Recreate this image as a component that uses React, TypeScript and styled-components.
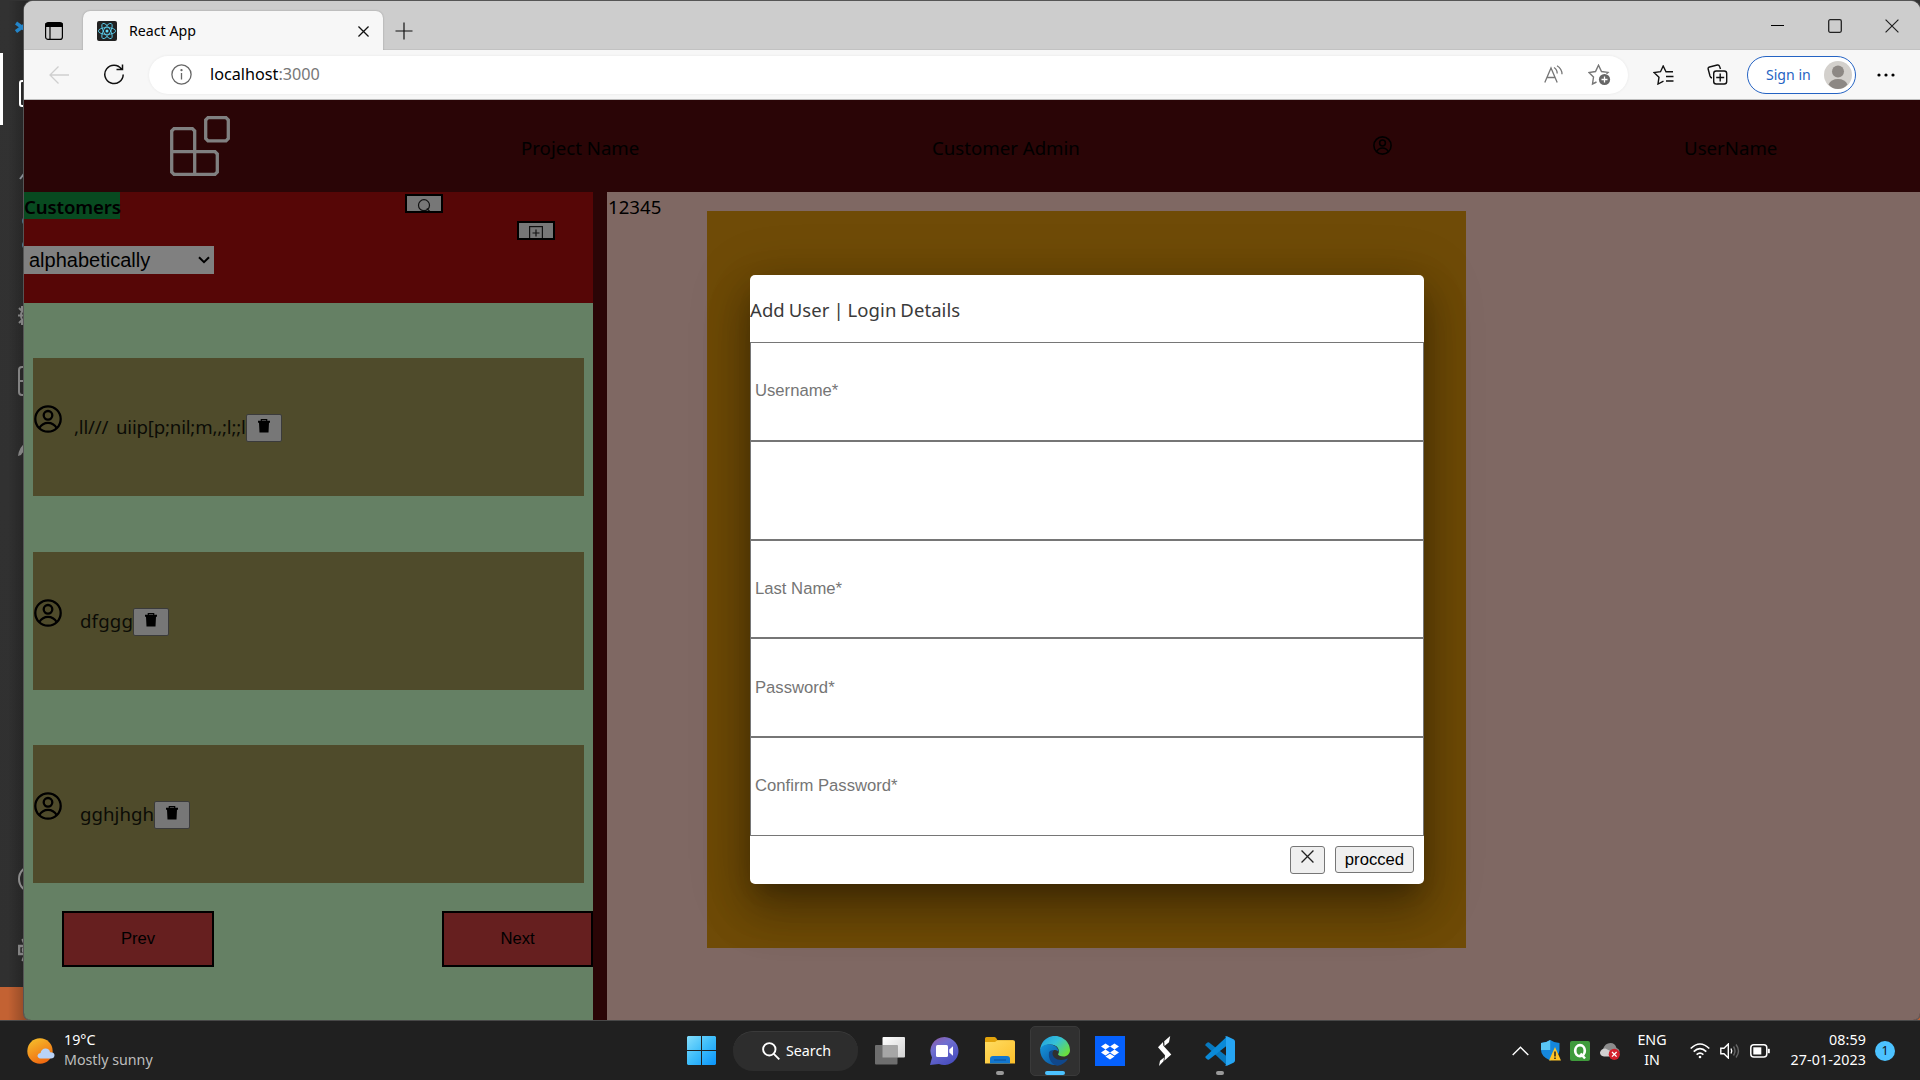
import React from "react";
import styled, { createGlobalStyle } from "styled-components";

const ui = `"Noto Sans", "Open Sans", sans-serif`;
const arial = `"Liberation Sans", Arial, sans-serif`;

const GlobalStyle = createGlobalStyle`
  * { box-sizing: border-box; }
  html, body { margin: 0; padding: 0; overflow: hidden; }
  body { font-family: ${ui}; color: #000; }
  svg { display: block; flex: none; }
`;

const Screen = styled.div`
  width: 1920px;
  height: 1080px;
  display: grid;
  grid-template-rows: 1020px 60px;
  overflow: hidden;
`;

const Desktop = styled.div`
  display: flex;
  padding-top: 1px;
  background: linear-gradient(#323232 0, #303030 987px, #c36233 987px);
  overflow: hidden;
`;

/* Editor strip that peeks out behind the browser */
const EditorStrip = styled.div`
  width: 36px;
  flex: none;
  height: 1019px;
  overflow: hidden;
  display: flex;
  flex-direction: column;
  background: linear-gradient(90deg, rgba(0, 0, 0, 0) 8px, rgba(0, 0, 0, 0.22) 24px);
`;

const StripItem = styled.div<{ $gap: number; $left?: number }>`
  margin-top: ${(p) => p.$gap}px;
  padding-left: ${(p) => p.$left ?? 18}px;
  flex: none;
`;

const ActiveMark = styled.div`
  margin-top: 19px;
  height: 72px;
  border-left: 3px solid #fff;
  padding: 27px 0 0 16px;
  flex: none;
`;

/* Browser window */
const Window = styled.div`
  width: 1896px;
  margin-left: -12px;
  height: 1019px;
  flex: none;
  border-radius: 9px 9px 7px 7px;
  overflow: hidden;
  box-shadow: 0 0 0 1px #555;
  background: #cdcdcd;
  display: grid;
  grid-template-rows: 49px 50px 920px;
`;

const TabBar = styled.div`
  display: flex;
  align-items: flex-end;
  background: #cdcdcd;
  border-bottom: 1px solid #c2c2c2;
`;

const TabActions = styled.div`
  padding: 0 0 9px 21px;
  width: 59px;
`;

const Tab = styled.div`
  width: 300px;
  height: 39px;
  margin-bottom: -1px;
  background: #f7f7f7;
  border-radius: 7px 7px 0 0;
  box-shadow: 0 0 2px rgba(0, 0, 0, 0.28);
  clip-path: inset(-3px -3px 0 -3px);
  display: flex;
  align-items: center;
  padding: 0 14px;
`;

const Favicon = styled.div`
  width: 20px;
  height: 20px;
  border-radius: 2px;
  background: #222;
`;

const TabTitle = styled.span`
  font-size: 14.2px;
  margin-left: 12px;
  flex: 1;
`;

const NewTab = styled.div`
  padding: 0 0 9px 12px;
`;

const WindowControls = styled.div`
  margin-left: auto;
  height: 48px;
  display: flex;
  align-items: center;
  gap: 43px;
  padding: 1px 21px 0 0;
`;

const Toolbar = styled.div`
  display: flex;
  align-items: center;
  padding-left: 25px;
  background: #f7f7f7;
  border-bottom: 1px solid #bdbdbd;
`;

const Address = styled.div`
  width: 1479px;
  height: 38px;
  margin-left: 25px;
  border-radius: 19px;
  background: #fff;
  box-shadow: 0 0 3px rgba(0, 0, 0, 0.07);
  display: flex;
  align-items: center;
  padding: 0 17px 0 22px;
`;

const Url = styled.span`
  font-size: 16.2px;
  margin-left: 18px;
  padding-bottom: 1px;
  flex: 1;
  color: #777;
  b { font-weight: 400; color: #000; }
`;

const SignIn = styled.div`
  width: 109px;
  height: 38px;
  margin-left: 19px;
  border: 1.5px solid #2563c3;
  border-radius: 19px;
  background: #fff;
  display: flex;
  align-items: center;
  justify-content: space-between;
  padding: 0 3px 0 18px;
  font-size: 14.1px;
  color: #2563c3;
`;

const Spaced = styled.div<{ $left: number }>`
  margin-left: ${(p) => p.$left}px;
`;

/* Page */
const Page = styled.div`
  position: relative;
  display: grid;
  grid-template-rows: 92px 828px;
  background: #2a0506;
  font-size: 18.65px;
`;

const Header = styled.header`
  display: flex;
  align-items: center;
  padding-left: 146px;
  color: #000;
`;

const HeaderItem = styled.div<{ $width: number; $lift?: number }>`
  width: ${(p) => p.$width}px;
  flex: none;
  padding-bottom: ${(p) => p.$lift ?? 0}px;
  padding-top: 2px;
  white-space: nowrap;
`;

const Body = styled.div`
  display: grid;
  grid-template-columns: 569px 1313px;
  column-gap: 14px;
`;

const Sidebar = styled.aside`
  background: #658064;
  display: flex;
  flex-direction: column;
`;

const Filters = styled.div`
  height: 111px;
  background: #560606;
  display: grid;
  grid-template-columns: 381px 112px 76px;
  grid-template-rows: 27px 27px 28px;
`;

const Title = styled.div`
  width: 96px;
  height: 27px;
  background: #084a20;
  font-size: 18.6px;
  font-weight: 600;
  line-height: 30px;
  letter-spacing: -0.12px;
  white-space: nowrap;
`;

const ToolButton = styled.button`
  width: 38px;
  height: 19px;
  margin: 2px 0 0;
  padding: 3px 0 0;
  border: 2px solid #000;
  background: #777;
  overflow: hidden;
  display: flex;
  justify-content: center;
  align-items: flex-start;
`;

const AddButton = styled(ToolButton)`
  grid-column: 2 / 4;
  grid-row: 2;
  margin-left: 112px;
`;

const Select = styled.div`
  grid-row: 3;
  width: 190px;
  height: 28px;
  background: #808080;
  font-family: ${arial};
  font-size: 20px;
  line-height: 29px;
  display: flex;
  justify-content: space-between;
  align-items: center;
  padding: 0 4px 0 5px;
`;

const CustomerList = styled.div`
  padding: 55px 9px 0;
  display: flex;
  flex-direction: column;
  gap: 55.5px;
`;

const CustomerCard = styled.div`
  height: 138px;
  background: #4f4b2b;
  display: flex;
  align-items: flex-start;
  padding: 47px 0 0 1px;
`;

const CustomerName = styled.div<{ $left: number; $track: number }>`
  margin: 8px 0 0 ${(p) => p.$left}px;
  line-height: 28px;
  letter-spacing: ${(p) => p.$track}px;
  word-spacing: 3px;
  color: #0b0b06;
  white-space: pre;
`;

const DeleteButton = styled.button`
  width: 36px;
  height: 28px;
  margin: 9px 0 0;
  padding: 4px 0 0;
  border: 1px solid #3b3b3b;
  border-radius: 2px;
  background: #777;
  display: flex;
  justify-content: center;
  align-items: flex-start;
`;

const Pager = styled.div`
  display: flex;
  justify-content: space-between;
  padding: 28px 0 0 38px;
`;

const PagerButton = styled.button<{ $w: number }>`
  width: ${(p) => p.$w}px;
  height: 56px;
  border: 2px solid #000;
  background: #661f1f;
  font: 16.67px ${arial};
  padding: 0;
  color: #000;
`;

const Content = styled.main`
  background: #7f6863;
  display: flex;
  align-items: flex-start;
`;

const Counter = styled.div`
  width: 100px;
  padding-left: 1px;
  line-height: 29px;
`;

const Panel = styled.div`
  width: 759px;
  height: 737px;
  margin-top: 19px;
  background: #6f4b07;
`;

const Modal = styled.form`
  position: absolute;
  left: 726px;
  top: 175px;
  width: 674px;
  height: 609px;
  border-radius: 5px;
  background: #fff;
  box-shadow: 0 14px 19px -9px rgba(0, 0, 0, 0.2), 0 30px 48px 4px rgba(0, 0, 0, 0.14),
    0 11px 58px 10px rgba(0, 0, 0, 0.12), 0 16px 44px 0 rgba(0, 0, 0, 0.2);
  display: flex;
  flex-direction: column;
`;

const ModalTitle = styled.div`
  height: 67px;
  line-height: 69px;
  color: #3a3a3a;
  font-size: 18.5px;
  word-spacing: -1px;
  letter-spacing: 0.08px;
`;

const Field = styled.input`
  width: 674px;
  height: 98.8px;
  flex: none;
  margin: 0;
  padding: 0 4px;
  border: 1px solid #767676;
  border-radius: 0;
  background: transparent;
  font: 16.67px ${arial};
  &::placeholder { color: #757575; opacity: 1; }
  &:last-of-type { padding-bottom: 1px; }
`;

const Actions = styled.div`
  display: flex;
  justify-content: flex-end;
  gap: 10px;
  padding: 10px 10px 0;
`;

const ActionButton = styled.button<{ $w: number; $h: number }>`
  width: ${(p) => p.$w}px;
  height: ${(p) => p.$h}px;
  padding: 1px 0 0;
  border: 1px solid #767676;
  border-radius: 3px;
  background: #efefef;
  font: 16.67px ${arial};
  color: #000;
  display: flex;
  justify-content: center;
  align-items: center;
  svg { margin-bottom: 7px; }
`;

/* Taskbar */
const Taskbar = styled.footer`
  background: #202020;
  border-top: 1px solid #484848;
  display: grid;
  grid-template-columns: 674px 838px 408px;
  color: #fff;
  font-size: 14.25px;
  line-height: 20px;
`;

const Weather = styled.div`
  display: flex;
  align-items: center;
  gap: 9px;
  padding-left: 27px;
`;

const Lifted = styled.div`
  padding-bottom: 2px;
`;

const Muted = styled.div`
  color: #bdbdbd;
`;

const Apps = styled.div`
  display: flex;
  align-items: center;
`;

const App55 = styled.div`
  width: 55px;
  height: 59px;
  display: flex;
  align-items: center;
  justify-content: center;
  position: relative;
`;

const ActiveTile = styled.div`
  width: 50px;
  height: 50px;
  border-radius: 5px;
  background: #303030;
  border: 1px solid #3a3a3a;
  display: flex;
  align-items: center;
  justify-content: center;
`;

const Running = styled.i<{ $active?: boolean }>`
  position: absolute;
  bottom: 5px;
  left: 50%;
  transform: translateX(-50%);
  width: ${(p) => (p.$active ? 20 : 8)}px;
  height: 4px;
  border-radius: 2px;
  background: ${(p) => (p.$active ? "#4cc2ff" : "#9a9a9a")};
`;

const SearchPill = styled.div`
  width: 125px;
  height: 40px;
  margin: 0 4px 0 4px;
  border-radius: 20px;
  background: #2d2d2d;
  border-top: 1px solid #3a3a3a;
  display: flex;
  align-items: center;
  gap: 6px;
  padding-left: 29px;
`;

const Tray = styled.div`
  display: flex;
  align-items: center;
`;

const Language = styled.div`
  width: 30px;
  margin-left: 17px;
  padding-bottom: 1px;
  text-align: center;
`;

const Clock = styled.div`
  width: 96px;
  padding-bottom: 2px;
  text-align: right;
  letter-spacing: 0.1px;
`;

const Badge = styled.div`
  width: 20px;
  height: 20px;
  margin-left: 9px;
  border-radius: 50%;
  background: #4cc2ff;
  color: #111;
  font-size: 12.5px;
  line-height: 19px;
  text-align: center;
`;

const Cross = ({ size, color = "#222", w = 1.3 }: { size: number; color?: string; w?: number }) => (
  <svg width={size} height={size} viewBox="0 0 12 12" stroke={color} strokeWidth={w * (12 / size)} fill="none">
    <path d="M0.5 0.5 11.5 11.5M11.5 0.5 0.5 11.5" />
  </svg>
);

const BlocksLogo = () => (
  <svg width="60" height="60" viewBox="0 0 60 60" fill="none" stroke="#808080" strokeWidth="3.300">
    <path d="M24.700 58.300H4L1.700 56V15L4 12.700H22.400L24.700 15V58.300H45L47.300 56V38L45 35.700H1.700" />
    <path d="M38 1.700H56L58.300 4V22.500L56 24.800H38L35.700 22.500V4z" />
  </svg>
);

const Account = ({ size }: { size: number }) => (
  <svg width={size} height={size} viewBox="0 0 28 28" fill="none" stroke="#000" strokeWidth="2.300">
    <circle cx="14" cy="14" r="12.700" />
    <circle cx="14" cy="10.300" r="4.300" />
    <path d="M5.300 23Q8.500 17.800 14 17.800T22.700 23" />
  </svg>
);

const ReactLogo = () => (
  <svg width="20" height="20" viewBox="-10 -10 20 20" fill="none" stroke="#61dafb" strokeWidth="0.800">
    <circle r="1.500" fill="#61dafb" stroke="none" />
    <ellipse rx="8.600" ry="3.400" />
    <ellipse rx="8.600" ry="3.400" transform="rotate(60)" />
    <ellipse rx="8.600" ry="3.400" transform="rotate(120)" />
  </svg>
);

const Trash = () => (
  <svg width="12" height="14" viewBox="0 0 12 14">
    <path d="M3.300 2V0.600h5.400V2" fill="none" stroke="#000" strokeWidth="1.200" />
    <path d="M0 1.800h12v2H11L10.500 13.500h-9L1 3.800H0z" fill="#000" />
  </svg>
);

const VsCode = ({ size }: { size: number }) => (
  <svg width={size} height={size} viewBox="0 0 30 30">
    <path d="M0.500 9.500Q0 8.700.700 8L2.500 6.500q.8-.5 1.600 0L22 20.500V29.500z" fill="#0879bf" />
    <path d="M0.500 20.500Q0 21.300.700 22L2.500 23.500q.8.500 1.600 0L22 9.500V.500z" fill="#0a8ad8" />
    <path d="M22 0.300 28.500 3.300Q30 4 30 5.500v19Q30 26 28.500 26.700L22 29.700q-1.200.4-2.200-.7.900.4 1.200-.8V1.800Q20.700.600 19.800 1 20.800-.1 22 .300z" fill="#26a5f3" />
  </svg>
);

const EdgeLogo = () => (
  <svg width="30" height="30" viewBox="0 0 30 30">
    <defs>
      <linearGradient id="edgeTop" x1="0" y1="0" x2="1" y2="0.700">
        <stop offset="0" stopColor="#1f9be0" />
        <stop offset="0.500" stopColor="#35c1d8" />
        <stop offset="1" stopColor="#6be03c" />
      </linearGradient>
      <linearGradient id="edgeLow" x1="0" y1="0" x2="0.800" y2="1">
        <stop offset="0" stopColor="#1596dc" />
        <stop offset="1" stopColor="#0c59a4" />
      </linearGradient>
    </defs>
    <path d="M0.300 12A15 15 0 0 1 30 14c0 4-3 6.500-6.500 6.500-3.500 0-6-1.300-5.400-2.500C20 16 19 8.500 10.500 8.500 5 8.500 1.500 11 .300 14z" fill="url(#edgeTop)" />
    <path d="M.100 14C1 10 6 7.800 10.500 8.500c5.500.700 8.200 4 7.800 7.500-.3-1.200-1.800-2.500-4.300-2-4 2-3.500 10 3.500 14.800A15 15 0 0 1 .100 14z" fill="url(#edgeLow)" />
    <path d="M9 16.500C8 23 12 29 17.500 29.800 22 29 26 26.500 28 22.500 27 22.200 25 24 21 24c-5 0-8.500-3.500-8.500-6.500 0-1.500.5-2.700 1.500-3.500-2.500 0-4.700 1-5 2.500z" fill="#10478a" />
  </svg>
);

const CUSTOMERS = [
  { name: ",ll/// uiip[p;nil;m,,;l;;l", left: 12, track: -0.19 },
  { name: "dfggg", left: 18, track: 0.15 },
  { name: "gghjhgh", left: 18, track: 0.05 },
];

const FIELDS = ["Username*", "", "Last Name*", "Password*", "Confirm Password*"];

const EditorIcons = () => (
  <EditorStrip>
    <StripItem $gap={20} $left={15}>
      <svg width="12" height="13" viewBox="0 0 12 13" stroke="#2384c8" strokeWidth="3.600" fill="none">
        <path d="M1 2 12 10M1 10.500 12 2.500" />
      </svg>
    </StripItem>
    <ActiveMark>
      <svg width="18" height="28" viewBox="0 0 18 28" fill="none" stroke="#fff" strokeWidth="2"><rect x="1" y="1" width="22" height="25" rx="2" /></svg>
    </ActiveMark>
    <StripItem $gap={46} $left={19}>
      <svg width="14" height="9" viewBox="0 0 14 9" fill="none" stroke="#8a8f96" strokeWidth="2"><path d="M1 8 8-1" /></svg>
    </StripItem>
    <StripItem $gap={36} $left={22}>
      <svg width="12" height="34" viewBox="0 0 12 34" fill="none" stroke="#51738a" strokeWidth="2"><circle cx="5" cy="5" r="4" /><circle cx="5" cy="29" r="4" /></svg>
    </StripItem>
    <StripItem $gap={56}>
      <svg width="18" height="19" viewBox="0 0 18 19" fill="none" stroke="#828282" strokeWidth="2"><ellipse cx="8" cy="9.500" rx="5" ry="6.500" /><path d="M0 9.500h5M1 2l3 3M1 17l3-3M4 0v4M4 19v-4" /></svg>
    </StripItem>
    <StripItem $gap={41}>
      <svg width="18" height="30" viewBox="0 0 18 30" fill="none" stroke="#828282" strokeWidth="2"><path d="M18 1H4Q1 1 1 4v22q0 3 3 3h14M1 15h17" /></svg>
    </StripItem>
    <StripItem $gap={45}>
      <svg width="18" height="15" viewBox="0 0 18 15" fill="#828282"><path d="M0 15Q1 6 9 0v9Q5 10 3 14z" /></svg>
    </StripItem>
    <StripItem $gap={409}>
      <svg width="18" height="28" viewBox="0 0 18 28" fill="none" stroke="#8b8b8b" strokeWidth="2"><circle cx="14" cy="14" r="13" /></svg>
    </StripItem>
    <StripItem $gap={43}>
      <svg width="18" height="28" viewBox="0 0 18 28" fill="none" stroke="#828282" strokeWidth="2.600"><path d="M8 2 5 4l2 5-1 1H1v8h5l1 1-2 5 3 2" /><circle cx="7" cy="14" r="2" /></svg>
    </StripItem>
  </EditorStrip>
);

const BrowserChrome = () => (
  <>
    <TabBar>
      <TabActions>
        <svg width="18" height="18" viewBox="0 0 18 18" fill="none" stroke="#000" strokeWidth="1.200">
          <rect x="0.600" y="0.600" width="16.800" height="16.800" rx="2.500" />
          <path d="M1 1.500h16v3H1z" fill="#000" />
          <path d="M5 5v12" />
        </svg>
      </TabActions>
      <Tab>
        <Favicon><ReactLogo /></Favicon>
        <TabTitle>React App</TabTitle>
        <Spaced $left={0} style={{ paddingTop: 2 }}><Cross size={11} color="#111" /></Spaced>
      </Tab>
      <NewTab>
        <svg width="18" height="18" stroke="#111" strokeWidth="1.200"><path d="M9 0.500v17M0.500 9h17" /></svg>
      </NewTab>
      <WindowControls>
        <svg width="14" height="14" stroke="#000" strokeWidth="1.200"><path d="M0 6.500h13" /></svg>
        <svg width="14" height="14" fill="none" stroke="#222" strokeWidth="1.300"><rect x="0.700" y="0.700" width="12.600" height="12.600" rx="1.500" /></svg>
        <Cross size={14} color="#222" w={1.2} />
      </WindowControls>
    </TabBar>
    <Toolbar>
      <svg width="20" height="18" viewBox="0 0 20 18" fill="none" stroke="#cfcfcf" strokeWidth="1.300"><path d="M20 9H1M9.500.500 1 9l8.500 8.500" /></svg>
      <Spaced $left={35}>
        <svg width="20" height="21" viewBox="0 0 20 21" fill="none" stroke="#111" strokeWidth="1.500"><path d="M17.500 5A9.200 9.200 0 1 0 19.200 10.500M18.500 0.500V5.500h-6" /></svg>
      </Spaced>
      <Address>
        <svg width="21" height="21" viewBox="0 0 21 21" fill="none" stroke="#666" strokeWidth="1.300"><circle cx="10.500" cy="10.500" r="9.600" /><path d="M10.500 9v6.500" /><circle cx="10.500" cy="6.200" r="0.500" fill="#666" /></svg>
        <Url><b>localhost</b>:3000</Url>
        <svg width="20" height="19" viewBox="0 0 20 19" fill="none" stroke="#777" strokeWidth="1.300"><path d="M.800 17.500 7 3l6.200 14.500M3 12.500h8M10 2.500q3.200 2 3.200 6M13 .700q5 3 5 8.500" /></svg>
        <Spaced $left={24}>
          <svg width="23" height="22" viewBox="0 0 23 22">
            <path d="M8.500 18 4.500 20 5.500 13 1 8.500 7.500 7.500 10.500 1.200 13.500 7.500 20 8.400 18.500 9.800" fill="none" stroke="#777" strokeWidth="1.400" />
            <circle cx="16.500" cy="15.500" r="5.600" fill="#666" /><path d="M13.500 15.500h6M16.500 12.500v6" stroke="#fff" strokeWidth="1.300" />
          </svg>
        </Spaced>
      </Address>
      <Spaced $left={25}>
        <svg width="21" height="20" viewBox="0 0 21 20" fill="none" stroke="#111" strokeWidth="1.400"><path d="M10.500 16.200 5 19 6 12.200 1 7.500 7.500 6.700 10.200 1 13 6.700h7M13 11.500h7.500M13 16h7.500" /></svg>
      </Spaced>
      <Spaced $left={33}>
        <svg width="21" height="21" viewBox="0 0 21 21" fill="none" stroke="#111" strokeWidth="1.400"><path d="M13.500 5 12.500 2.300Q12 .600 10.300 1L2.500 3Q.700 3.500 1.200 5.300L3 12q.600 1.700 2 2" /><rect x="6.700" y="7" width="13" height="13" rx="2.500" /><path d="M13.200 9.500v8M9.200 13.500h8" /></svg>
      </Spaced>
      <SignIn>
        Sign in
        <svg width="28" height="28" viewBox="0 0 28 28"><circle cx="14" cy="14" r="14" fill="#d3d0cc" /><circle cx="14" cy="10.500" r="6" fill="#8d8884" /><path d="M4.500 23.500Q7 18 14 18t9.500 5.500Q19.500 28 14 28t-9.500-4.500z" fill="#8d8884" /></svg>
      </SignIn>
      <Spaced $left={21}>
        <svg width="18" height="4" viewBox="0 0 18 4"><circle cx="2" cy="2" r="1.600" /><circle cx="9" cy="2" r="1.600" /><circle cx="16" cy="2" r="1.600" /></svg>
      </Spaced>
    </Toolbar>
  </>
);

const SystemTray = () => (
  <Tray>
    <svg width="17" height="10" viewBox="0 0 17 10" fill="none" stroke="#fff" strokeWidth="1.400"><path d="M.700 9 8.500 1.200 16.300 9" /></svg>
    <Spaced $left={12}>
      <svg width="20" height="21" viewBox="0 0 20 21">
        <path d="M0 3Q5 3 9.200 0 13.500 3 18.500 3v7q0 6.500-9.300 10.500Q0 16.500 0 10z" fill="#1587dc" />
        <path d="M9.200 0V10H0V3Q5 3 9.200 0z" fill="#5ac7f5" />
        <path d="M14 7 20 20.500H8z" fill="#ffc526" /><path d="M14 11.500v5M14 17.500v1.500" stroke="#222" strokeWidth="1.500" />
      </svg>
    </Spaced>
    <Spaced $left={9}>
      <svg width="20" height="20" viewBox="0 0 20 20">
        <rect width="20" height="20" rx="2" fill="#3f9b3c" /><ellipse cx="10" cy="9.700" rx="4.800" ry="5.500" fill="none" stroke="#fff" strokeWidth="2.700" /><path d="M10.500 12.500 15 17.500" stroke="#fff" strokeWidth="2.500" />
      </svg>
    </Spaced>
    <Spaced $left={10}>
      <svg width="20" height="18" viewBox="0 0 20 18">
        <path d="M3 7Q5 1 10.500 1q4.500 0 6 5 3 1 3 4L10 12z" fill="#8c8c8c" /><path d="M4 14.500Q0 14 0 10.500 1 6.500 5.500 6.500L13 10.500v4z" fill="#d0d0d0" />
        <circle cx="14.300" cy="12.300" r="5.600" fill="#d3202d" /><path d="m12 10 4.600 4.600M16.600 10 12 14.600" stroke="#fff" strokeWidth="1.300" />
      </svg>
    </Spaced>
    <Language>ENG<br />IN</Language>
    <Spaced $left={23}>
      <svg width="20" height="16" viewBox="0 0 20 16" fill="none" stroke="#fff" strokeWidth="1.600"><path d="M.700 5.500q9.300-9 18.600 0M3.700 8.700q6.300-6 12.600 0M6.600 11.700q3.400-3.200 6.800 0" /><circle cx="10" cy="14" r="1.300" fill="#fff" stroke="none" /></svg>
    </Spaced>
    <Spaced $left={10}>
      <svg width="20" height="16" viewBox="0 0 20 16" fill="none" stroke="#fff" strokeWidth="1.400"><path d="M.800 5.200H4L8.300 1v14L4 10.800H.800z" /><path d="M11 5.500q1.500 2.500 0 5" /><path d="M13.500 3.500q3 4.500 0 9M16 1.500q5 6.500 0 13" stroke="#666" /></svg>
    </Spaced>
    <Spaced $left={10}>
      <svg width="20" height="14" viewBox="0 0 20 14" fill="none" stroke="#fff" strokeWidth="1.500"><rect x="0.800" y="0.800" width="16" height="12.200" rx="3" /><rect x="3.300" y="3.300" width="8" height="7.200" fill="#fff" stroke="none" /><path d="M18.800 4.800v4.400" strokeWidth="2" /></svg>
    </Spaced>
    <Clock>08:59<br />27-01-2023</Clock>
    <Badge>1</Badge>
  </Tray>
);

const Dock = () => (
  <Apps>
    <App55>
      <svg width="29" height="29" viewBox="0 0 29 29">
        <defs><linearGradient id="win" gradientUnits="userSpaceOnUse" x1="0" y1="0" x2="29" y2="29"><stop offset="0" stopColor="#84defc" /><stop offset="0.500" stopColor="#3cbcfa" /><stop offset="1" stopColor="#0a94fa" /></linearGradient></defs>
        <path d="M1 0h13v14H0V1zM15 0h13l1 1v13H15zM0 15h14v14H1l-1-1zM15 15h14v13l-1 1H15z" fill="url(#win)" />
      </svg>
    </App55>
    <SearchPill>
      <svg width="18" height="18" viewBox="0 0 18 18" fill="none" stroke="#fff" strokeWidth="1.900"><circle cx="7.300" cy="7.300" r="6.200" /><path d="m11.800 11.800 5.500 5.500" /></svg>
      Search
    </SearchPill>
    <App55>
      <svg width="30" height="28" viewBox="0 0 30 28">
        <defs><linearGradient id="tv" x1="0" y1="0" x2="1" y2="1"><stop offset="0" stopColor="#fff" /><stop offset="1" stopColor="#d2d2d2" /></linearGradient></defs>
        <rect x="7.500" y="0" width="22.500" height="20.500" rx="1" fill="url(#tv)" /><rect x="0" y="8" width="22.500" height="19.500" rx="1" fill="#6e6e6e" /><path d="M7.500 8h15v12.500h-15z" fill="#a6a6a6" />
      </svg>
    </App55>
    <App55>
      <svg width="29" height="28" viewBox="0 0 29 28">
        <defs><linearGradient id="chat" x1="0" y1="0" x2="0.600" y2="1"><stop offset="0" stopColor="#96589f" /><stop offset="0.400" stopColor="#6f6fd0" /><stop offset="1" stopColor="#4a4fc0" /></linearGradient></defs>
        <path d="M14.500 0A14.200 14 0 1 1 9 27L0 28 2 20.500A14.200 14 0 0 1 14.500 0z" fill="url(#chat)" />
        <rect x="6" y="8" width="12" height="12" rx="1.500" fill="#fff" /><path d="M19.300 12.500 23 9.200v9.600l-3.700-3.300z" fill="#fff" />
      </svg>
    </App55>
    <App55>
      <svg width="30" height="27" viewBox="0 0 30 27">
        <defs><linearGradient id="fold" x1="0" y1="0" x2="1" y2="1"><stop offset="0" stopColor="#ffdc62" /><stop offset="1" stopColor="#fcbf2a" /></linearGradient></defs>
        <path d="M0 1.500Q0 0 1.500 0h8q1.500 0 3 3.300H28V8H0z" fill="#e2a30c" /><path d="M0 5h10l2.500-1.700H28.500Q30 3.300 30 5v21.500H0z" fill="url(#fold)" />
        <path d="M5 26.500V22q0-3 3-3h14q3 0 3 3v4.500z" fill="#1277cf" /><path d="M9 23h12" stroke="#0a4f96" strokeWidth="1" />
      </svg>
      <Running />
    </App55>
    <App55><ActiveTile><EdgeLogo /></ActiveTile><Running $active /></App55>
    <App55>
      <svg width="30" height="30" viewBox="0 0 30 30">
        <rect width="30" height="30" fill="#0561fd" />
        <path d="m10.500 7.500 4.500 3-4.500 3-4.500-3zM19.500 7.500l4.500 3-4.500 3-4.500-3zM10.500 13.500l4.500 3-4.500 3-4.500-3zM19.500 13.500l4.500 3-4.500 3-4.500-3zM15 17.700l4.500 2.900L15 23.500l-4.500-2.900z" fill="#fff" />
      </svg>
    </App55>
    <App55>
      <svg width="14" height="30" viewBox="0 0 14 30" fill="#fff"><path d="M12.200 0 11 6.200 6.500 10 6.200 5.200zM5 6 0 11.200 7 19.300 6.300 24.800 13.300 18.600 5.400 9.800zM6 21.500 5.500 25.300 1 30 2 24.800z" /></svg>
    </App55>
    <App55><VsCode size={30} /><Running /></App55>
  </Apps>
);

export default function App() {
  return (
    <Screen>
      <GlobalStyle />
      <Desktop>
        <EditorIcons />
        <Window>
          <BrowserChrome />
          <Page>
            <Header>
              <HeaderItem $width={351} $lift={2}><BlocksLogo /></HeaderItem>
              <HeaderItem $width={411}>Project Name</HeaderItem>
              <HeaderItem $width={441}>Customer Admin</HeaderItem>
              <HeaderItem $width={311} $lift={4}><Account size={19} /></HeaderItem>
              <HeaderItem $width={120}>UserName</HeaderItem>
            </Header>
            <Body>
              <Sidebar>
                <Filters>
                  <Title>Customers</Title>
                  <ToolButton type="button">
                    <svg width="15" height="16" viewBox="0 0 15 16" fill="none" stroke="#111" strokeWidth="1.200"><circle cx="7" cy="6.200" r="5.500" /><path d="m9.800 9.500 4.500 4.500" /></svg>
                  </ToolButton>
                  <AddButton type="button">
                    <svg width="14" height="14" viewBox="0 0 14 14" fill="none" stroke="#111" strokeWidth="1.200"><rect x="0.600" y="0.600" width="12.800" height="12.800" /><path d="M7 3.500v7M3.500 7h7" /></svg>
                  </AddButton>
                  <Select>
                    alphabetically
                    <svg width="12" height="8" viewBox="0 0 12 8" fill="none" stroke="#000" strokeWidth="2"><path d="M1 1.200 6 6.200 11 1.200" /></svg>
                  </Select>
                </Filters>
                <CustomerList>
                  {CUSTOMERS.map((c) => (
                    <CustomerCard key={c.name}>
                      <Account size={28} />
                      <CustomerName $left={c.left} $track={c.track}>{c.name}</CustomerName>
                      <DeleteButton type="button"><Trash /></DeleteButton>
                    </CustomerCard>
                  ))}
                </CustomerList>
                <Pager>
                  <PagerButton $w={152}>Prev</PagerButton>
                  <PagerButton $w={151}>Next</PagerButton>
                </Pager>
              </Sidebar>
              <Content>
                <Counter>12345</Counter>
                <Panel />
              </Content>
            </Body>
            <Modal>
              <ModalTitle>Add User | Login Details</ModalTitle>
              {FIELDS.map((f, i) => (
                <Field key={i} placeholder={f} />
              ))}
              <Actions>
                <ActionButton type="button" $w={35} $h={28}><Cross size={13} w={1.3} /></ActionButton>
                <ActionButton type="button" $w={79} $h={27}>procced</ActionButton>
              </Actions>
            </Modal>
          </Page>
        </Window>
      </Desktop>
      <Taskbar>
        <Weather>
          <svg width="28" height="26" viewBox="0 0 28 26">
            <defs>
              <linearGradient id="sun" x1="0.200" y1="0" x2="0.700" y2="1"><stop offset="0" stopColor="#f6bd2b" /><stop offset="1" stopColor="#f0650f" /></linearGradient>
            </defs>
            <circle cx="13" cy="13" r="12.700" fill="url(#sun)" />
            <path d="M13.500 20.500q-3-.5-3-3 .5-2.500 3-2.500 1-4.500 5-4.500t4.500 3.700q4.500-.2 4.500 3-.3 3.300-3.500 3.300z" fill="#b9d3f8" />
          </svg>
          <Lifted>19°C<Muted>Mostly sunny</Muted></Lifted>
        </Weather>
        <Dock />
        <SystemTray />
      </Taskbar>
    </Screen>
  );
}
